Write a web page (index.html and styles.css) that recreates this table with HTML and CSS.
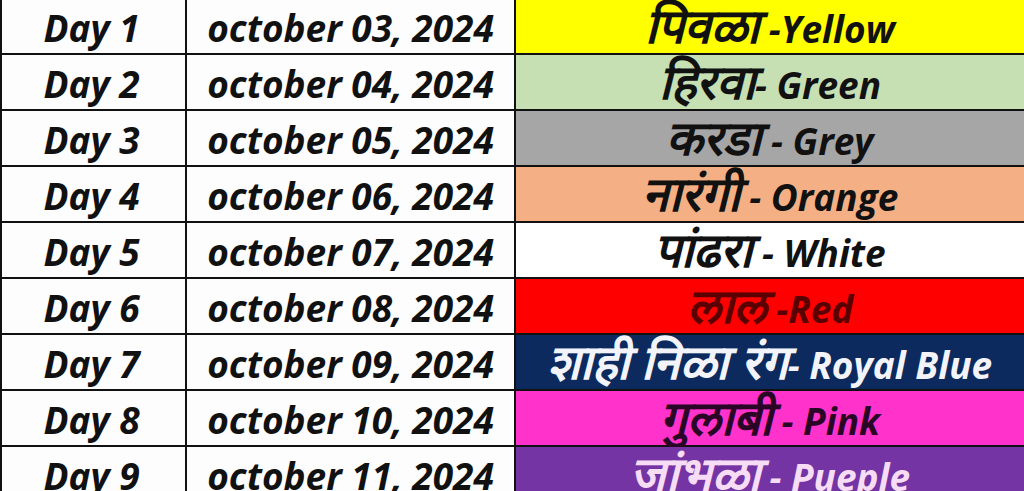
FILE: index.html
```html
<!DOCTYPE html>
<html lang="mr">
<head>
<meta charset="utf-8">
<title>Navratri Colours 2024</title>
<link rel="stylesheet" href="styles.css">
</head>
<body>
<div class="table">
  <div class="cell day">Day 1</div>
  <div class="cell date">october 03, 2024</div>
  <div class="cell colour yellow"><span class="label"><span class="mr">पिवळा</span> -Yellow</span></div>

  <div class="cell day">Day 2</div>
  <div class="cell date">october 04, 2024</div>
  <div class="cell colour green"><span class="label"><span class="mr">हिरवा</span>- Green</span></div>

  <div class="cell day">Day 3</div>
  <div class="cell date">october 05, 2024</div>
  <div class="cell colour grey"><span class="label"><span class="mr">करडा</span> - Grey</span></div>

  <div class="cell day">Day 4</div>
  <div class="cell date">october 06, 2024</div>
  <div class="cell colour orange"><span class="label"><span class="mr">नारंगी</span> - Orange</span></div>

  <div class="cell day">Day 5</div>
  <div class="cell date">october 07, 2024</div>
  <div class="cell colour white"><span class="label"><span class="mr">पांढरा</span> - White</span></div>

  <div class="cell day">Day 6</div>
  <div class="cell date">october 08, 2024</div>
  <div class="cell colour red"><span class="label"><span class="mr">लाल</span> -Red</span></div>

  <div class="cell day">Day 7</div>
  <div class="cell date">october 09, 2024</div>
  <div class="cell colour blue"><span class="label"><span class="mr">शाही निळा रंग</span>- Royal Blue</span></div>

  <div class="cell day">Day 8</div>
  <div class="cell date">october 10, 2024</div>
  <div class="cell colour pink"><span class="label"><span class="mr">गुलाबी</span> - Pink</span></div>

  <div class="cell day">Day 9</div>
  <div class="cell date">october 11, 2024</div>
  <div class="cell colour purple"><span class="label"><span class="mr">जांभळा</span> - Pueple</span></div>
</div>
</body>
</html>
```
FILE: styles.css
```css
html, body {
  margin: 0;
  padding: 0;
  background: #ffffff;
  overflow: hidden;
}

.table {
  display: grid;
  grid-template-columns: 183px 327px 1fr;
  grid-template-rows: 53px;
  grid-auto-rows: 54px;
  column-gap: 2px;
  row-gap: 2px;
  padding-left: 2px;
  background: #111111;
  width: 1024px;
  height: 491px;
  overflow: hidden;
  box-sizing: border-box;
}

.cell {
  display: flex;
  align-items: center;
  justify-content: center;
  background: #fdfdfd;
  font-family: "Open Sans", "Liberation Sans", sans-serif;
  font-weight: 700;
  font-style: italic;
  font-size: 37px;
  color: #111111;
  white-space: nowrap;
  padding-top: 2px;
}

.day {
  padding-right: 4px;
}

.colour {
  font-size: 37px;
  padding-top: 0;
  padding-bottom: 3px;
}

.label {
  line-height: 1;
}

.mr {
  font-size: 48px;
  line-height: 1;
}

.yellow { background: #ffff00; }
.green  { background: #c6e0b4; }
.grey   { background: #a6a6a6; }
.orange { background: #f4b084; }
.white  { background: #ffffff; }
.red    { background: #ff0000; color: #5a0000; }
.blue   { background: #0c2a5e; color: #f2f4fa; }
.pink   { background: #ff33cc; color: #2a0626; }
.purple { background: #7434a4; color: #f6dcf4; }
```
